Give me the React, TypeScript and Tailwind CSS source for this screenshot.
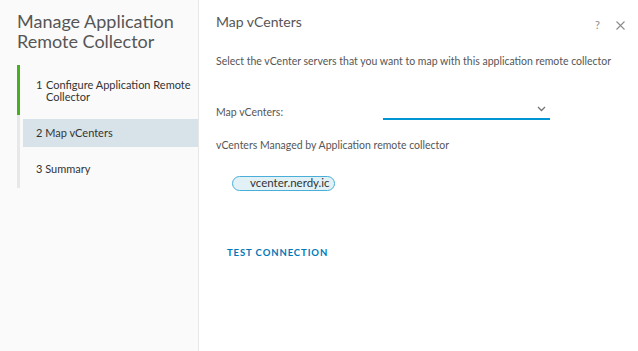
import React from "react";

export default function App() {
  const font = { fontFamily: "Lato, 'Open Sans', sans-serif" };
  return (
    <div className="w-[638px] h-[351px] flex bg-white overflow-hidden text-[#565656]" style={font}>
      <div className="w-[199px] shrink-0 bg-[#fafafa] border-r border-[#e8e8e8] pl-[17px] pt-[11px]">
        <div className="text-[18px] leading-[20px] text-[#565656]">
          Manage Application
          <br />
          Remote Collector
        </div>
        <div className="mt-[14px] border-l-[3px] border-[#e8e8e8] pb-[5px] text-[11px] text-[#333333]">
          <div className="-ml-[3px] border-l-[3px] border-[#48b01e] h-[50px] pl-[16px] pt-[14px] leading-[12px] flex">
            <span className="w-[10px] shrink-0">1</span>
            <span>Configure Application Remote Collector</span>
          </div>
          <div className="mt-[4px] ml-[3px] h-[28px] pl-[13px] bg-[#d8e3e9] flex items-center">
            2 Map vCenters
          </div>
          <div className="mt-[8px] h-[28px] pl-[16px] flex items-center">3 Summary</div>
        </div>
      </div>
      <div className="flex-1 pl-[17px] pr-[13px] pt-[13px]">
        <div className="flex items-start justify-between">
          <div className="text-[14px] leading-[18px] text-[#565656]">Map vCenters</div>
          <div className="flex items-center gap-[16px] mt-[4px] text-[#8c8c8c]">
            <span className="text-[11px]">?</span>
            <svg width="9" height="9" viewBox="0 0 9 9" stroke="#8c8c8c" strokeWidth="1.1" fill="none">
              <path d="M0.5 0.5 L8.5 8.5 M8.5 0.5 L0.5 8.5" />
            </svg>
          </div>
        </div>
        <div className="mt-[20px] text-[10.5px] leading-[14px] whitespace-nowrap">
          Select the vCenter servers that you want to map with this application remote collector
        </div>
        <div className="mt-[34px] flex items-start">
          <div className="w-[167px] text-[10.5px] leading-[14px] pt-[3px]">Map vCenters:</div>
          <div className="w-[167px] h-[18px] border-b-2 border-[#0095d3] flex justify-end items-start pr-[4px]">
            <svg width="9" height="6" viewBox="0 0 9 6" className="mt-[4px]" fill="none" stroke="#737373" strokeWidth="1.3">
              <path d="M1 1 L4.5 4.5 L8 1" />
            </svg>
          </div>
        </div>
        <div className="mt-[18px] text-[10.5px] leading-[14px]">
          vCenters Managed by Application remote collector
        </div>
        <div className="mt-[24px] ml-[16px] w-[103px] h-[15px] rounded-full border border-[#49afd9] bg-[#e1f1f6] overflow-hidden flex items-center pl-[17px] text-[11.5px] text-[#333333] whitespace-nowrap">
          vcenter.nerdy.ic
        </div>
        <div className="mt-[55px] ml-[11px] text-[9.5px] font-bold tracking-[0.9px] text-[#0079b8]">
          TEST CONNECTION
        </div>
      </div>
    </div>
  );
}
